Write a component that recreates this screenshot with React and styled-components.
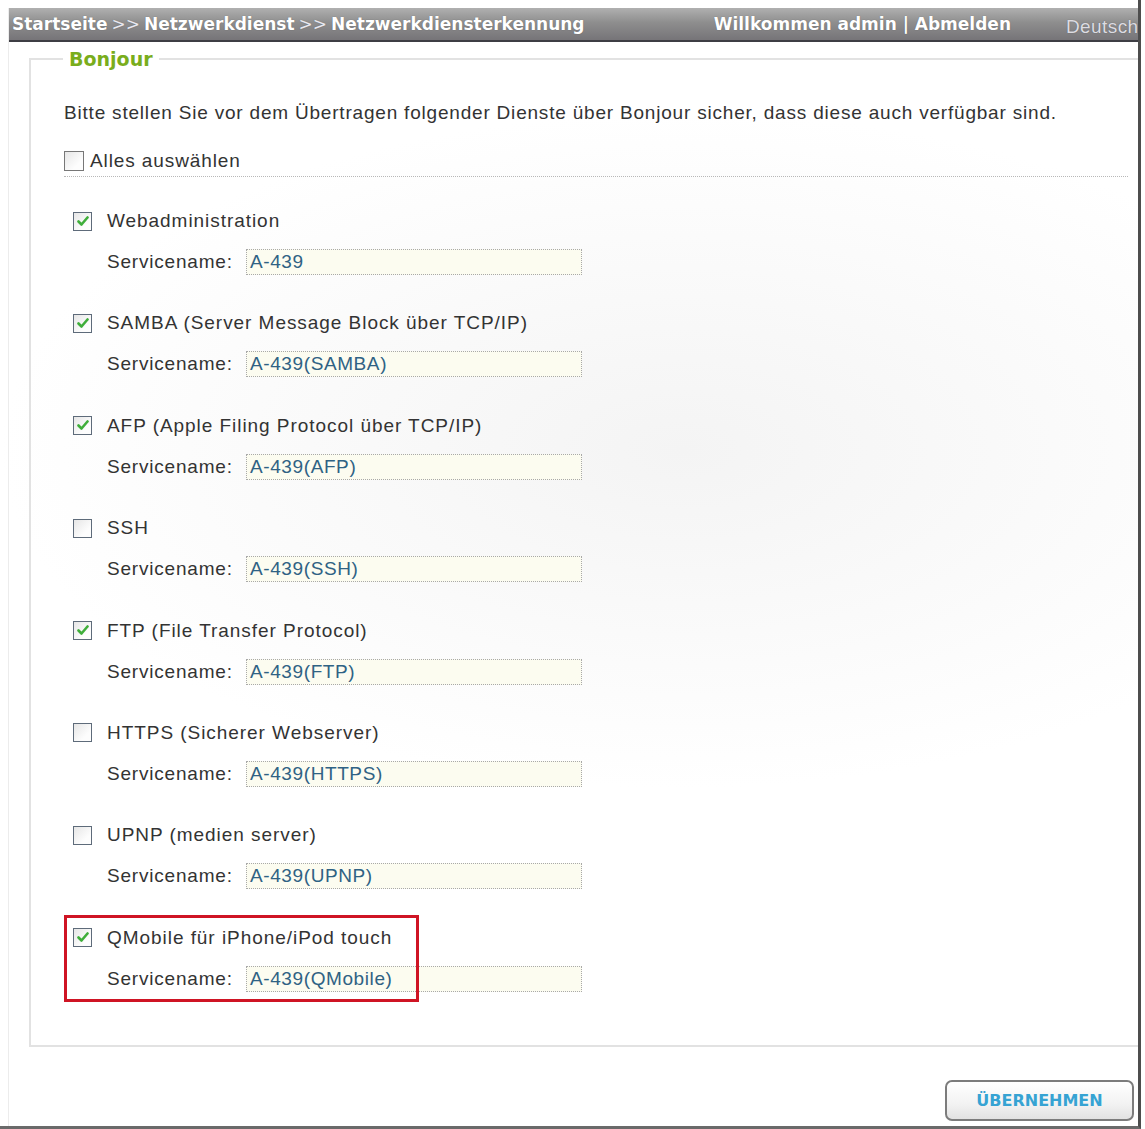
import React from 'react'
import styled, { createGlobalStyle } from 'styled-components'

const GlobalStyle = createGlobalStyle`
  html, body {
    margin: 0;
    padding: 0;
    background: #fff;
  }
  body {
    font-family: "Liberation Sans", Arial, sans-serif;
    color: #333;
  }
`

const Frame = styled.div`
  box-sizing: border-box;
  width: 1141px;
  height: 1129px;
  padding: 8px 0 0 8px;
  border-right: 3px solid #4d4d4d;
  border-bottom: 3px solid #6a6a6a;
  display: flex;
  flex-direction: column;
  background: radial-gradient(ellipse 60% 30% at 60% 40%, #f4f4f4 0%, #fff 100%);
`

const Inner = styled.div`
  flex: 1;
  display: flex;
  flex-direction: column;
  border-left: 1px solid #ececec;
`

const Header = styled.div`
  height: 32px;
  display: flex;
  align-items: center;
  padding-left: 3px;
  background: linear-gradient(#b0b0b0 0%, #8e8e8e 45%, #767478 100%);
  border-bottom: 2px solid #3e3e44;
  font-family: "DejaVu Sans", Tahoma, sans-serif;
  font-size: 17px;
  color: #fff;
  white-space: nowrap;
  overflow: hidden;
  text-shadow: 0 0 1px rgba(0, 0, 0, 0.35);
`

const Crumb = styled.span`
  font-weight: bold;
`

const Sep = styled.span`
  color: #e8e8f0;
  margin: 0 4px;
  font-weight: normal;
`

const Welcome = styled.span`
  margin-left: auto;
  font-weight: bold;
`

const Lang = styled.span`
  flex: none;
  width: 72px;
  overflow: hidden;
  margin-left: 55px;
  margin-top: 6px;
  color: #dcdce2;
  font-family: "Liberation Sans", Arial, sans-serif;
  font-size: 19px;
  letter-spacing: 0.4px;
`

const Body = styled.div`
  flex: 1;
  display: flex;
  flex-direction: column;
  padding: 6px 0 0 20px;
`

const Fieldset = styled.fieldset`
  margin: 0;
  padding: 0 10px 30px 33px;
  border: 2px solid #e2e2e2;
  border-right: none;
  height: 999px;
  box-sizing: border-box;
`

const Legend = styled.legend`
  margin-left: -1px;
  padding: 0 6px;
  color: #79ad1c;
  font-family: "DejaVu Sans", Tahoma, sans-serif;
  font-weight: bold;
  font-size: 19px;
`

const Intro = styled.p`
  margin: 32px 0 0;
  font-size: 19px;
  letter-spacing: 0.8px;
  color: #333;
`

const SelectAll = styled.label`
  display: flex;
  align-items: center;
  gap: 6px;
  margin-top: 26px;
  padding-bottom: 4px;
  border-bottom: 1px dotted #b8b8b8;
  font-size: 19px;
  letter-spacing: 0.9px;
`

const List = styled.div`
  display: flex;
  flex-direction: column;
  padding: 29px 0 0 9px;
`

const Item = styled.div`
  position: relative;
  display: flex;
  flex-direction: column;
  gap: 12px;
  height: 102.4px;
`

const LabelRow = styled.label`
  height: 30px;
  display: flex;
  align-items: center;
  gap: 15px;
  font-size: 19px;
  letter-spacing: 0.95px;
`

const ServiceRow = styled.div`
  height: 28px;
  display: flex;
  align-items: center;
  padding-left: 34px;
  font-size: 19px;
  letter-spacing: 0.8px;
`

const FieldLabel = styled.span`
  width: 139px;
`

const NameInput = styled.div`
  box-sizing: border-box;
  width: 336px;
  height: 26px;
  display: flex;
  align-items: center;
  padding-left: 3px;
  background: #fcfcf0;
  border: 1px dotted #a9a9a9;
  color: #2f6284;
  font-size: 19px;
  letter-spacing: 0.6px;
`

const Box = styled.span`
  box-sizing: border-box;
  width: ${p => p.$size}px;
  height: ${p => p.$size}px;
  flex: none;
  display: flex;
  align-items: center;
  justify-content: center;
  border: 1.5px solid ${p => (p.$dark ? '#777' : '#5e6b7a')};
  background: linear-gradient(135deg, #e6e6e6 0%, #fdfdfd 70%);
`

/* red annotation frame drawn over the last entry */
const Highlight = styled.div`
  position: absolute;
  left: -9px;
  top: -8px;
  width: 355px;
  height: 87px;
  box-sizing: border-box;
  border: 3px solid #cf1424;
  pointer-events: none;
`

const Footer = styled.div`
  display: flex;
  justify-content: flex-end;
  padding: 33px 4px 0 0;
`

const ApplyButton = styled.button`
  width: 189px;
  height: 41px;
  border: 2px solid #7c7c7c;
  border-radius: 7px;
  background: linear-gradient(#ffffff 0%, #f2f2f2 60%, #e2e2e2 100%);
  color: #36a3d3;
  font-family: "DejaVu Sans", Tahoma, sans-serif;
  font-weight: bold;
  font-size: 16px;
  cursor: pointer;
`

function CheckBox({ checked, size = 19, dark }) {
  return (
    <Box $size={size} $dark={dark}>
      {checked && (
        <svg width="12" height="11" viewBox="0 0 12 11">
          <path d="M1.5 5.5 L4.5 8.5 L10.5 1.5" fill="none" stroke="#3fae3a" strokeWidth="2.6" strokeLinecap="round" strokeLinejoin="round" />
        </svg>
      )}
    </Box>
  )
}

const services = [
  { label: 'Webadministration', name: 'A-439', on: true },
  { label: 'SAMBA (Server Message Block über TCP/IP)', name: 'A-439(SAMBA)', on: true },
  { label: 'AFP (Apple Filing Protocol über TCP/IP)', name: 'A-439(AFP)', on: true },
  { label: 'SSH', name: 'A-439(SSH)', on: false },
  { label: 'FTP (File Transfer Protocol)', name: 'A-439(FTP)', on: true },
  { label: 'HTTPS (Sicherer Webserver)', name: 'A-439(HTTPS)', on: false },
  { label: 'UPNP (medien server)', name: 'A-439(UPNP)', on: false },
  { label: 'QMobile für iPhone/iPod touch', name: 'A-439(QMobile)', on: true, marked: true },
]

export default function App() {
  return (
    <>
      <GlobalStyle />
      <Frame>
        <Inner>
          <Header>
            <Crumb>Startseite</Crumb>
            <Sep>&gt;&gt;</Sep>
            <Crumb>Netzwerkdienst</Crumb>
            <Sep>&gt;&gt;</Sep>
            <Crumb>Netzwerkdiensterkennung</Crumb>
            <Welcome>Willkommen admin | Abmelden</Welcome>
            <Lang>Deutsch</Lang>
          </Header>
          <Body>
            <Fieldset>
              <Legend>Bonjour</Legend>
              <Intro>
                Bitte stellen Sie vor dem Übertragen folgender Dienste über Bonjour sicher, dass diese auch verfügbar sind.
              </Intro>
              <SelectAll>
                <CheckBox size={20} dark />
                Alles auswählen
              </SelectAll>
              <List>
                {services.map(s => (
                  <Item key={s.label}>
                    <LabelRow>
                      <CheckBox checked={s.on} />
                      {s.label}
                    </LabelRow>
                    <ServiceRow>
                      <FieldLabel>Servicename:</FieldLabel>
                      <NameInput>{s.name}</NameInput>
                    </ServiceRow>
                    {s.marked && <Highlight />}
                  </Item>
                ))}
              </List>
            </Fieldset>
            <Footer>
              <ApplyButton>ÜBERNEHMEN</ApplyButton>
            </Footer>
          </Body>
        </Inner>
      </Frame>
    </>
  )
}
